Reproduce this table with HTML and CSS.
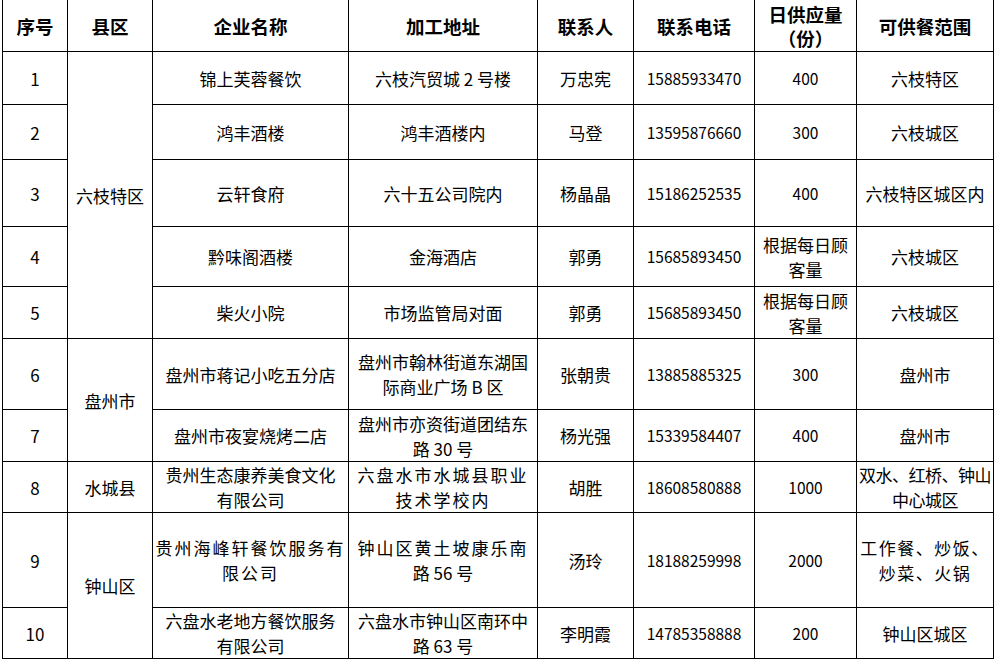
FILE: index.html
```html
<!DOCTYPE html>
<html lang="zh-CN">
<head>
<meta charset="utf-8">
<title>供餐企业名单</title>
<link rel="stylesheet" href="styles.css">
</head>
<body>
<table class="sheet">
  <colgroup>
    <col class="c-no"><col class="c-area"><col class="c-name"><col class="c-addr">
    <col class="c-person"><col class="c-phone"><col class="c-qty"><col class="c-range">
  </colgroup>
  <thead>
    <tr class="h-head">
      <th>序号</th><th>县区</th><th>企业名称</th><th>加工地址</th><th>联系人</th><th>联系电话</th><th>日供应量<br>（份）</th><th>可供餐范围</th>
    </tr>
  </thead>
  <tbody>
    <tr class="h-r1">
      <td>1</td><td rowspan="5">六枝特区</td><td>锦上芙蓉餐饮</td><td>六枝汽贸城 2 号楼</td><td>万忠宪</td><td class="num">15885933470</td><td class="num">400</td><td>六枝特区</td>
    </tr>
    <tr class="h-r2">
      <td>2</td><td>鸿丰酒楼</td><td>鸿丰酒楼内</td><td>马登</td><td class="num">13595876660</td><td class="num">300</td><td>六枝城区</td>
    </tr>
    <tr class="h-r3">
      <td>3</td><td>云轩食府</td><td>六十五公司院内</td><td>杨晶晶</td><td class="num">15186252535</td><td class="num">400</td><td>六枝特区城区内</td>
    </tr>
    <tr class="h-r4">
      <td>4</td><td>黔味阁酒楼</td><td>金海酒店</td><td>郭勇</td><td class="num">15685893450</td><td>根据每日顾<br>客量</td><td>六枝城区</td>
    </tr>
    <tr class="h-r5">
      <td>5</td><td>柴火小院</td><td>市场监管局对面</td><td>郭勇</td><td class="num">15685893450</td><td>根据每日顾<br>客量</td><td>六枝城区</td>
    </tr>
    <tr class="h-r6">
      <td>6</td><td rowspan="2">盘州市</td><td>盘州市蒋记小吃五分店</td><td>盘州市翰林街道东湖国<br>际商业广场 B 区</td><td>张朝贵</td><td class="num">13885885325</td><td class="num">300</td><td>盘州市</td>
    </tr>
    <tr class="h-r7">
      <td>7</td><td>盘州市夜宴烧烤二店</td><td>盘州市亦资街道团结东<br>路 30 号</td><td>杨光强</td><td class="num">15339584407</td><td class="num">400</td><td>盘州市</td>
    </tr>
    <tr class="h-r8">
      <td>8</td><td>水城县</td><td>贵州生态康养美食文化<br>有限公司</td><td><span class="wide">六盘水市水城县职业</span><br><span class="wide">技术学校内</span></td><td>胡胜</td><td class="num">18608580888</td><td class="num">1000</td><td class="tight">双水、红桥、钟山<br>中心城区</td>
    </tr>
    <tr class="h-r9">
      <td>9</td><td rowspan="2">钟山区</td><td><span class="wide">贵州海峰轩餐饮服务有</span><br><span class="wide">限公司</span></td><td><span class="wide">钟山区黄土坡康乐南</span><br>路 56 号</td><td>汤玲</td><td class="num">18188259998</td><td class="num">2000</td><td class="loose">工作餐、炒饭、<br>炒菜、火锅</td>
    </tr>
    <tr class="h-r10">
      <td>10</td><td>六盘水老地方餐饮服务<br>有限公司</td><td>六盘水市钟山区南环中<br>路 63 号</td><td>李明霞</td><td class="num">14785358888</td><td class="num">200</td><td>钟山区城区</td>
    </tr>
  </tbody>
</table>
</body>
</html>
```

FILE: styles.css
```css
html, body {
  margin: 0;
  padding: 0;
  background: #ffffff;
}

body {
  padding-left: 2px;
  font-family: "Noto Sans CJK SC", "Noto Sans", sans-serif;
  color: #000000;
}

.sheet {
  border-collapse: collapse;
  table-layout: fixed;
  width: 992px;
  margin-top: -1px;
}

.c-no { width: 65px; }
.c-area { width: 85px; }
.c-name { width: 196px; }
.c-addr { width: 189px; }
.c-person { width: 96px; }
.c-phone { width: 121px; }
.c-qty { width: 102px; }
.c-range { width: 137px; }

.sheet th,
.sheet td {
  border: 1px solid #000000;
  padding: 0 1px;
  text-align: center;
  vertical-align: middle;
  line-height: 25px;
  white-space: nowrap;
  overflow: hidden;
}

.sheet th {
  font-size: 18.5px;
  font-weight: 700;
  line-height: 24px;
}

.sheet td {
  font-size: 17px;
  font-weight: 400;
}

.sheet td.num {
  font-size: 15.5px;
}

.wide {
  letter-spacing: 2px;
}

.sheet td.tight {
  letter-spacing: -0.5px;
}

.sheet td.loose {
  letter-spacing: 1.5px;
}

.h-head { height: 52px; }
.h-r1 { height: 53px; }
.h-r2 { height: 55px; }
.h-r3 { height: 67px; }
.h-r4 { height: 60px; }
.h-r5 { height: 52px; }
.h-r6 { height: 71px; }
.h-r7 { height: 52px; }
.h-r8 { height: 51px; }
.h-r9 { height: 95px; }
.h-r10 { height: 51px; }
```
